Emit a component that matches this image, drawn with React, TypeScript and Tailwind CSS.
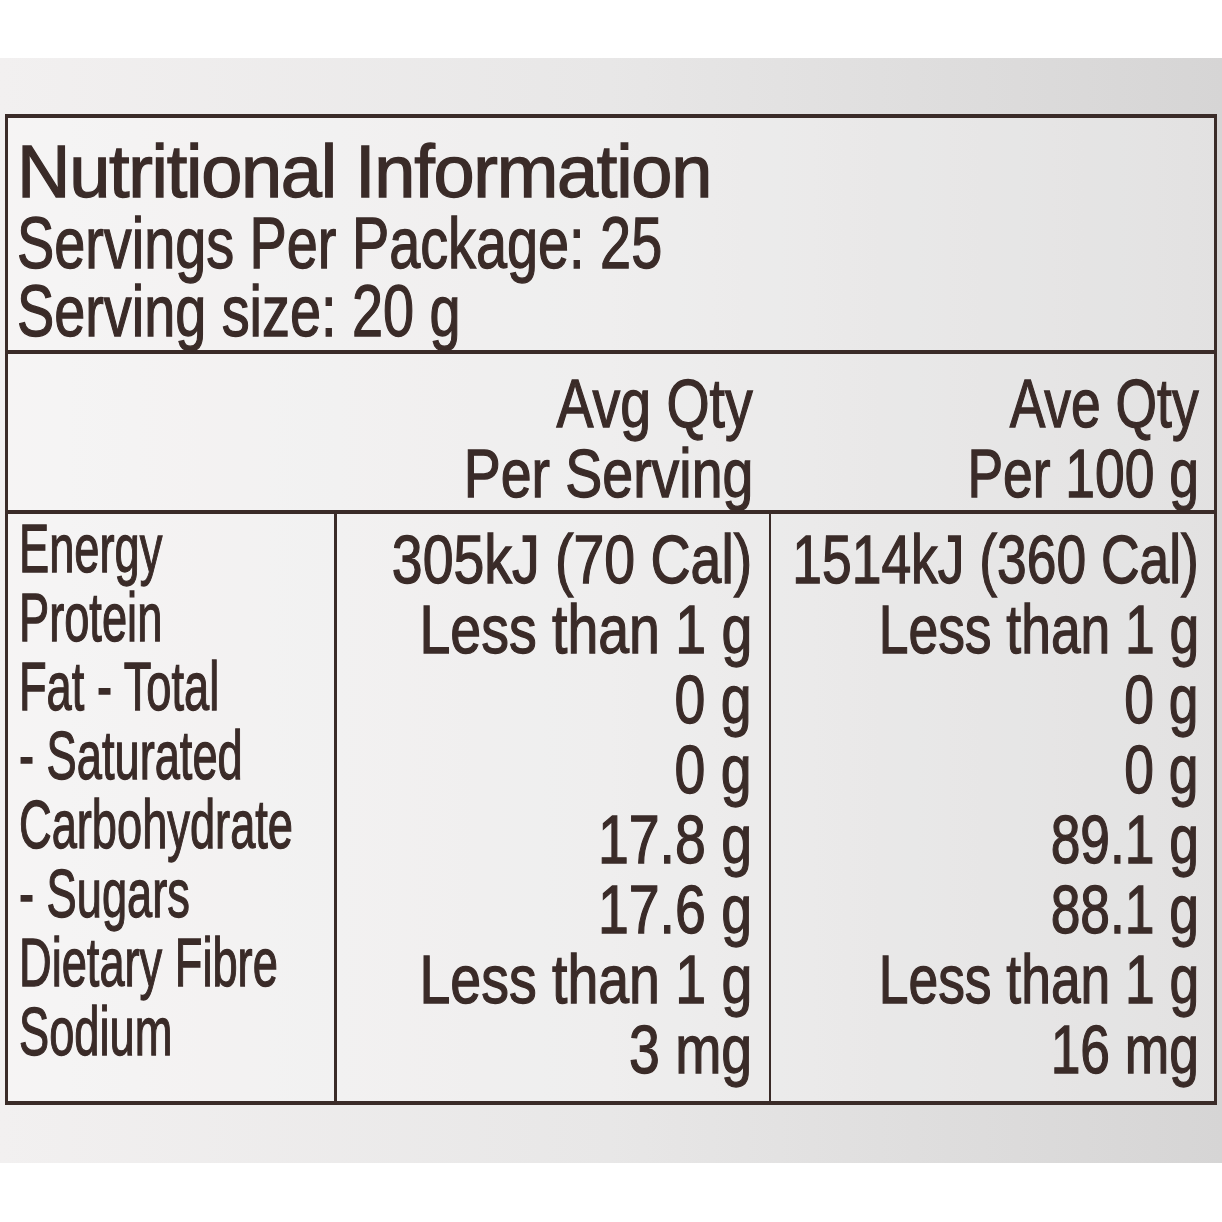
const labels = [
  "Energy",
  "Protein",
  "Fat - Total",
  "- Saturated",
  "Carbohydrate",
  "- Sugars",
  "Dietary Fibre",
  "Sodium",
];
const perServing = [
  "305kJ (70 Cal)",
  "Less than 1 g",
  "0 g",
  "0 g",
  "17.8 g",
  "17.6 g",
  "Less than 1 g",
  "3 mg",
];
const per100 = [
  "1514kJ (360 Cal)",
  "Less than 1 g",
  "0 g",
  "0 g",
  "89.1 g",
  "88.1 g",
  "Less than 1 g",
  "16 mg",
];

function ValueLine({ text, narrow }: { text: string; narrow?: boolean }) {
  return (
    <div className="flex justify-end min-w-0">
      <span
        className={
          narrow
            ? "inline-block shrink-0 origin-right scale-x-[0.785]"
            : "inline-block shrink-0 origin-right scale-x-[0.815]"
        }
      >
        {text}
      </span>
    </div>
  );
}

export default function App() {
  return (
    <div className="w-[1222px] h-[1222px] overflow-hidden bg-white font-['Liberation_Sans',Arial,sans-serif] text-[#3a2b28] [-webkit-text-stroke:1.3px_#3a2b28]">
      <div className="h-[58px] bg-white" />
      <div className="h-[1105px] bg-gradient-to-r from-[#f2f0f0] via-[#e8e7e7] to-[#d6d5d5] pt-[56px] pl-[5px]">
        <div className="w-[1212px] border-x-[3px] border-t-4 border-b-4 border-[#3a2b28] bg-white/30">
          {/* Title block */}
          <div className="h-[236px] border-b-4 border-[#3a2b28] pt-[17px] pl-[9px] whitespace-nowrap">
            <div className="text-[74px] leading-[74px] tracking-[-1.3px]">Nutritional Information</div>
            <div className="text-[72px] leading-[68px] origin-left scale-x-[0.775]">Servings Per Package: 25</div>
            <div className="text-[72px] leading-[68px] origin-left scale-x-[0.775]">Serving size: 20 g</div>
          </div>

          {/* Column headers */}
          <div className="h-[160px] border-b-4 border-[#3a2b28] flex pt-[14px] whitespace-nowrap text-[68px] leading-[70px]">
            <div className="w-[329px] shrink-0" />
            <div className="w-[434px] shrink-0 min-w-0 pr-[18px]">
              <ValueLine text="Avg Qty" />
              <ValueLine text="Per Serving" />
            </div>
            <div className="flex-1 min-w-0 pr-[15px]">
              <ValueLine text="Ave Qty" narrow />
              <ValueLine text="Per 100 g" narrow />
            </div>
          </div>

          {/* Body */}
          <div className="h-[587px] flex whitespace-nowrap text-[68px]">
            <div className="w-[329px] shrink-0 border-r-[3px] border-[#3a2b28] pl-[11px] leading-[69px]">
              {labels.map((l) => (
                <div key={l} className="origin-left scale-x-[0.665]">
                  {l}
                </div>
              ))}
            </div>
            <div className="w-[434px] shrink-0 min-w-0 border-r-[2px] border-[#3a2b28] pt-[10px] pr-[17px] leading-[70px]">
              {perServing.map((v, i) => (
                <ValueLine key={i} text={v} />
              ))}
            </div>
            <div className="flex-1 min-w-0 pt-[10px] pr-[15px] leading-[70px]">
              {per100.map((v, i) => (
                <ValueLine key={i} text={v} narrow />
              ))}
            </div>
          </div>
        </div>
      </div>
      <div className="h-[59px] bg-white" />
    </div>
  );
}
